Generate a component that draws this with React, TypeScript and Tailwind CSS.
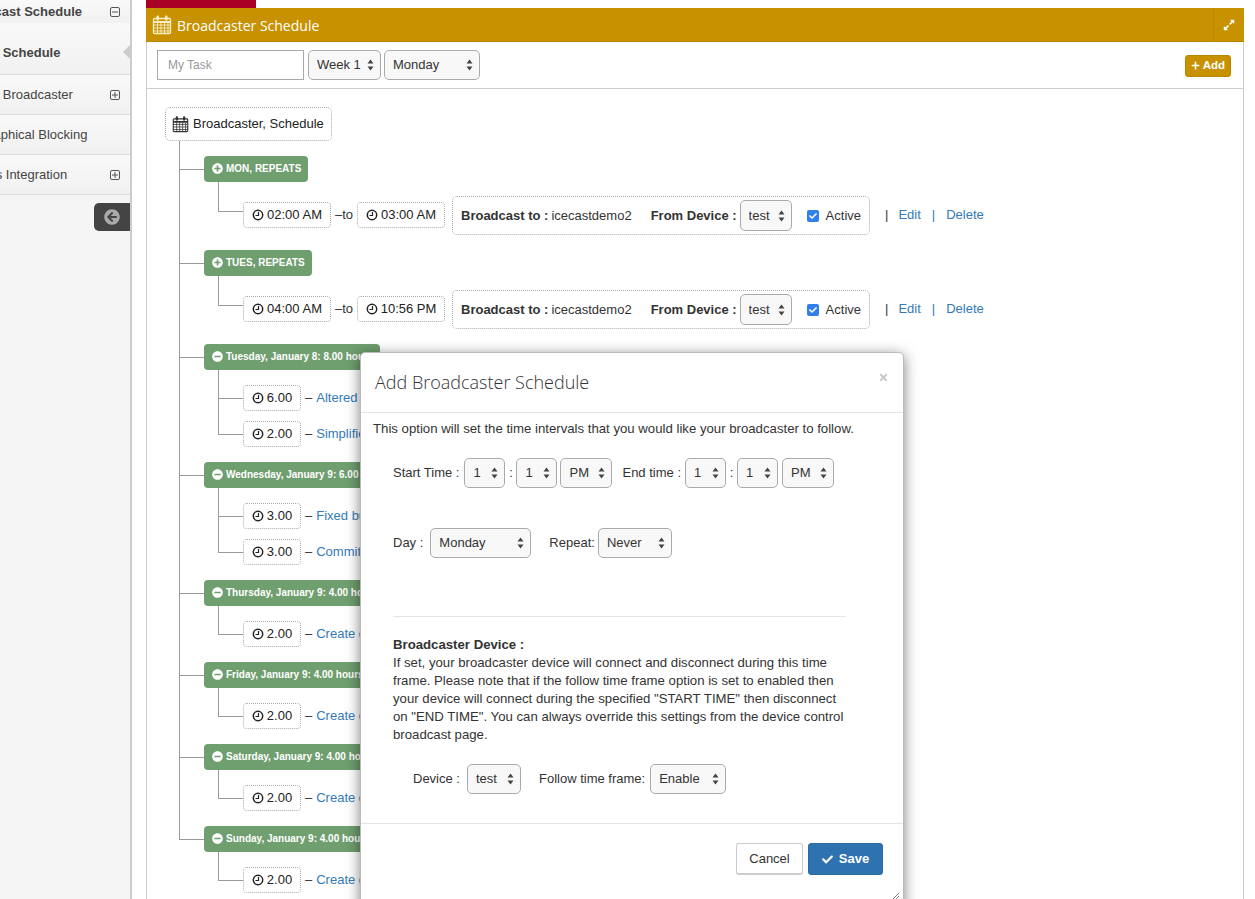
import { FaArrowCircleLeft, FaCheck, FaExpandAlt, FaMinusCircle, FaPlus, FaPlusCircle, FaTimes } from 'react-icons/fa';

const LINE = 'border-[#999]';

function CalendarIcon({ className }: { className: string }) {
  return (
    <svg viewBox="0 0 20 20" className={className} fill="none" stroke="currentColor">
      <path d="M2.5 4h15a1 1 0 0 1 1 1v13a1 1 0 0 1-1 1h-15a1 1 0 0 1-1-1V5a1 1 0 0 1 1-1z" strokeWidth="1.3" />
      <path d="M1.5 7.5h17" strokeWidth="2" />
      <path d="M1.5 10.5h17M1.5 13.5h17M1.5 16.500h17M5.500 7.500V19M9 7.500V19M12.500 7.500V19M16 7.500V19" strokeWidth="0.9" />
      <rect x="4.500" y="1" width="2.500" height="5" rx="1" fill="currentColor" stroke="none" />
      <rect x="13" y="1" width="2.500" height="5" rx="1" fill="currentColor" stroke="none" />
    </svg>
  );
}

function ClockIcon() {
  return (
    <svg viewBox="0 0 12 12" className="w-[12px] h-[12px] shrink-0" fill="none" stroke="currentColor">
      <circle cx="6" cy="6" r="4.700" strokeWidth="1.500" />
      <path d="M6.500 3v3.500H3.500" strokeWidth="1.200" />
    </svg>
  );
}

function BoxIcon({ minus }: { minus?: boolean }) {
  return (
    <svg viewBox="0 0 10 10" className="w-[10px] h-[10px] text-[#555]" fill="none" stroke="currentColor">
      <rect x="0.500" y="0.500" width="9" height="9" rx="1.500" />
      <path d={minus ? 'M2 5h6' : 'M2 5h6M5 2v6'} />
    </svg>
  );
}

function UpDown() {
  return (
    <svg viewBox="0 0 7 12" className="absolute right-[7px] top-1/2 -translate-y-1/2 w-[7px] h-[12px] pointer-events-none text-[#444]" fill="currentColor">
      <path d="M3.500 0.500 6.500 4.500H0.500zM3.500 11.500 0.500 7.500H6.500z" />
    </svg>
  );
}

function Select({ value, width, height = 'h-[30px]' }: { value: string; width: string; height?: string }) {
  return (
    <span className={`relative inline-block shrink-0 ${width} ${height}`}>
      <select
        defaultValue={value}
        className="appearance-none block w-full h-full pl-[8px] pr-4 rounded-[5px] border border-[#aaa] bg-[#f8f8f8] text-[13px] text-[#333]"
      >
        <option>{value}</option>
      </select>
      <UpDown />
    </span>
  );
}

function TimeBox({ text, width }: { text: string; width: string }) {
  return (
    <span className={`inline-flex items-center justify-center gap-[3px] h-[26px] shrink-0 ${width} rounded-[4px] border border-dotted border-[#aaa] text-[#222] bg-white`}>
      <ClockIcon />
      {text}
    </span>
  );
}

function BroadcastRow({ from, to }: { from: string; to: string }) {
  return (
    <div className="flex items-center h-[38px] -mt-[1px] mb-[1px] text-[#333]">
      <TimeBox text={from} width="w-[88px]" />
      <span className="w-[26px] text-center">–to</span>
      <TimeBox text={to} width="w-[88px]" />
      <div className="flex items-center h-[39px] -mb-[1px] w-[418px] ml-[7px] pl-[8px] rounded-[5px] border border-dotted border-[#aaa]">
        <b>Broadcast to :</b>
        <span className="ml-[3px]">icecastdemo2</span>
        <b className="ml-[19px]">From Device :</b>
        <span className="ml-[3px]"><Select value="test" width="w-[52px]" height="h-[31px]" /></span>
        <span className="ml-[15px] w-[12px] h-[12px] rounded-[2px] bg-[#2f80ed] text-white flex items-center justify-center">
          <FaCheck className="w-[8px] h-[8px]" />
        </span>
        <span className="ml-[7px]">Active</span>
      </div>
      <span className="ml-[15px]">|</span>
      <a className="ml-[10px] text-[#337ab7]">Edit</a>
      <span className="ml-[11px] text-[#337ab7]">|</span>
      <a className="ml-[11px] text-[#337ab7]">Delete</a>
    </div>
  );
}

function TaskRow({ hours, title }: { hours: string; title: string }) {
  return (
    <div className="flex items-center h-[26px]">
      <TimeBox text={hours} width="w-[58px]" />
      <span className="ml-[4px] text-[#333]">–</span>
      <a className="ml-[4px] text-[#337ab7] whitespace-nowrap">{title}</a>
    </div>
  );
}

// stub is the elbow; the column border carries the line on to the next sibling
function Child({ first, last, stub, children }: { first: boolean; last: boolean; stub: string; children: React.ReactNode }) {
  return (
    <div className="flex">
      <div className={`w-[25px] shrink-0 ${last ? '' : `border-l ${LINE}`}`}>
        <div className={`border-b ${LINE} ${last ? `border-l ${LINE}` : ''} ${stub}`} />
      </div>
      <div className={first ? 'pt-[15px]' : 'pt-[10px]'}>{children}</div>
    </div>
  );
}

function Group({ label, open, last, children }: { label: string; open?: boolean; last?: boolean; children: React.ReactNode }) {
  return (
    <div className="flex">
      <div className={`w-[25px] shrink-0 ${last ? '' : `border-l ${LINE}`}`}>
        <div className={`h-[29px] border-b ${LINE} ${last ? `border-l ${LINE}` : ''}`} />
      </div>
      <div className="pt-[15px]">
        <div className="inline-flex items-center gap-[3px] h-[26px] pl-[8px] pr-[7px] pb-[1px] rounded-[4px] bg-[#6f9e6f] text-white text-[10px] font-bold whitespace-nowrap align-top">
          {open ? <FaPlusCircle className="w-[11px] h-[11px]" /> : <FaMinusCircle className="w-[11px] h-[11px]" />}
          {label}
        </div>
        <div className="ml-[14px]">{children}</div>
      </div>
    </div>
  );
}

const taskGroups = [
  { label: 'Tuesday, January 8: 8.00 hours', tasks: [['6.00', 'Altered code'], ['2.00', 'Simplified code']] },
  { label: 'Wednesday, January 9: 6.00 hours', tasks: [['3.00', 'Fixed bugs'], ['3.00', 'Committing code']] },
  { label: 'Thursday, January 9: 4.00 hours', tasks: [['2.00', 'Create docs']] },
  { label: 'Friday, January 9: 4.00 hours', tasks: [['2.00', 'Create docs']] },
  { label: 'Saturday, January 9: 4.00 hours', tasks: [['2.00', 'Create docs']] },
  { label: 'Sunday, January 9: 4.00 hours', tasks: [['2.00', 'Create docs']] },
];

function SideItem({ label, offset, bold, icon, border, size }: { label: string; offset: string; bold?: boolean; icon?: 'plus' | 'minus'; border?: boolean; size?: string }) {
  return (
    <div className={`flex items-center justify-between ${size ?? 'h-[40px]'} pr-[10px] overflow-hidden whitespace-nowrap bg-gradient-to-b from-[#f9f9f9] to-[#f1f1f1] ${border ? 'border-b border-[#ddd]' : ''} ${bold ? 'font-bold' : ''} text-[#444]`}>
      <span className={offset}>{label}</span>
      {icon && <BoxIcon minus={icon === 'minus'} />}
    </div>
  );
}

export default function App() {
  return (
    <div className="flex h-[899px] w-[1255px] overflow-hidden relative bg-white text-[13px] text-[#333] font-['Liberation_Sans',Arial,sans-serif]">
      {/* sidebar */}
      <aside className="w-[132px] shrink-0 bg-[#f5f5f5] border-r-2 border-[#ccc] flex flex-col">
        <SideItem label="Broadcast Schedule" offset="ml-[-43px]" bold icon="minus" size="h-[23px]" />
        <div className="relative">
          <SideItem label="My Schedule" offset="ml-[-19px]" bold border size="h-[52px] pt-[8px]" />
          <span className="absolute right-0 top-[22px] w-0 h-0 border-y-[7px] border-y-transparent border-r-[7px] border-r-[#ccc]" />
        </div>
        <SideItem label="Add Broadcaster" offset="ml-[-24px]" icon="plus" border />
        <SideItem label="Graphical Blocking" offset="ml-[-21px]" border />
        <SideItem label="Icecast's Integration" offset="ml-[-48px]" icon="plus" border />
        <div className="flex justify-end mt-[8px]">
          <div className="w-[36px] h-[28px] rounded-l-[5px] bg-[#444] flex items-center justify-center">
            <FaArrowCircleLeft className="w-[16px] h-[16px] text-[#aaa]" />
          </div>
        </div>
      </aside>

      {/* main panel */}
      <main className="ml-[14px] w-[1098px] shrink-0 flex flex-col">
        <div className="w-[110px] h-[8px] bg-[#ab0026] shrink-0" />
        <div className="flex items-center justify-between h-[34px] shrink-0 bg-[#c79100] border-b border-[#b88600] text-white">
          <div className="flex items-center gap-[5px] pl-[6px] text-[14px] font-['Open_Sans',sans-serif]">
            <CalendarIcon className="w-[20px] h-[21px] text-[#fbeecb]" />
            <span className="pt-[2px]">Broadcaster Schedule</span>
          </div>
          <div className="w-[31px] h-full border-l border-[#b88600] flex items-center justify-center">
            <FaExpandAlt className="w-[12px] h-[12px]" />
          </div>
        </div>
        <div className="flex-1 border-x border-[#ccc]">
          <div className="flex items-center h-[47px] pl-[10px] pr-[12px] border-b border-[#ccc]">
            <input placeholder="My Task" className="w-[147px] h-[30px] px-[10px] border border-[#aaa] text-[12px] placeholder:text-[#999]" />
            <span className="ml-[4px]"><Select value="Week 1" width="w-[73px]" /></span>
            <span className="ml-[3px]"><Select value="Monday" width="w-[96px]" /></span>
            <button className="ml-auto flex items-center justify-between w-[46px] h-[22px] px-[5px] mt-[1px] rounded-[3px] bg-[#c79100] border border-[#b88600] text-white text-[11.5px] font-bold">
              <FaPlus className="w-[9px] h-[9px]" /> Add
            </button>
          </div>

          <div className="pl-[18px] pt-[18px]">
            <div className="flex items-center gap-[4px] h-[34px] w-[167px] pl-[6px] rounded-[5px] border border-dotted border-[#aaa] text-[#222]">
              <CalendarIcon className="w-[17px] h-[18px] text-[#333]" />
              Broadcaster, Schedule
            </div>
            <div className="ml-[14px]">
              <Group label="MON, REPEATS" open>
                <Child first last stub="h-[30px]"><BroadcastRow from="02:00 AM" to="03:00 AM" /></Child>
              </Group>
              <Group label="TUES, REPEATS" open>
                <Child first last stub="h-[30px]"><BroadcastRow from="04:00 AM" to="10:56 PM" /></Child>
              </Group>
              {taskGroups.map((g, i) => (
                <Group key={g.label} label={g.label} last={i === taskGroups.length - 1}>
                  {g.tasks.map((t, j) => (
                    <Child key={j} first={j === 0} last={j === g.tasks.length - 1} stub={j === 0 ? 'h-[29px]' : 'h-[24px]'}>
                      <TaskRow hours={t[0]} title={t[1]} />
                    </Child>
                  ))}
                </Group>
              ))}
            </div>
          </div>
        </div>
      </main>

      {/* modal */}
      <div className="absolute left-[360px] top-[352px] w-[544px] h-[560px] bg-white rounded-[5px] border border-[#bbb] shadow-[0_3px_14px_rgba(0,0,0,0.5)] flex flex-col">
        <div className="relative h-[60px] shrink-0 border-b border-[#e5e5e5] pl-[14px] pt-[16px] text-[18px] font-light text-[#333] font-['Open_Sans',sans-serif] leading-[26px]">
          Add Broadcaster Schedule
          <FaTimes className="absolute right-[14px] top-[19px] w-[11px] h-[11px] text-[#c8c8c8]" />
        </div>
        <div className="h-[410px] shrink-0 px-[12px] pt-[7px]">
          <p className="leading-[18px] text-[13.2px]">This option will set the time intervals that you would like your broadcaster to follow.</p>
          <div className="flex items-center mt-[20px] ml-[20px] h-[30px]">
            <span>Start Time :</span>
            <span className="ml-[5px]"><Select value="1" width="w-[41px]" /></span>
            <span className="w-[11px] text-center">:</span>
            <Select value="1" width="w-[41px]" />
            <span className="ml-[3px]"><Select value="PM" width="w-[52px]" /></span>
            <span className="ml-[10px]">End time :</span>
            <span className="ml-[4px]"><Select value="1" width="w-[41px]" /></span>
            <span className="w-[11px] text-center">:</span>
            <Select value="1" width="w-[41px]" />
            <span className="ml-[4px]"><Select value="PM" width="w-[52px]" /></span>
          </div>
          <div className="flex items-center mt-[40px] ml-[20px] h-[30px]">
            <span>Day :</span>
            <span className="ml-[7px]"><Select value="Monday" width="w-[101px]" /></span>
            <span className="ml-[18px]">Repeat:</span>
            <span className="ml-[3px]"><Select value="Never" width="w-[74px]" /></span>
          </div>
          <div className="mt-[58px] ml-[20px] w-[453px] border-t border-[#e5e5e5]" />
          <div className="mt-[19px] ml-[20px] w-[453px] leading-[18px] text-[13.2px]">
            <b>Broadcaster Device :</b>
            <p>If set, your broadcaster device will connect and disconnect during this time frame. Please note that if the follow time frame option is set to enabled then your device will connect during the specified "START TIME" then disconnect on "END TIME". You can always override this settings from the device control broadcast page.</p>
          </div>
          <div className="flex items-center mt-[20px] ml-[40px] h-[30px]">
            <span>Device :</span>
            <span className="ml-[7px]"><Select value="test" width="w-[54px]" /></span>
            <span className="ml-[18px]">Follow time frame:</span>
            <span className="ml-[5px]"><Select value="Enable" width="w-[76px]" /></span>
          </div>
        </div>
        <div className="flex justify-end gap-[5px] border-t border-[#e5e5e5] pt-[19px] pr-[20px]">
          <button className="w-[67px] h-[32px] rounded-[3px] border border-[#ccc] border-b-2 bg-white text-[#333]">Cancel</button>
          <button className="flex items-center justify-center gap-[6px] w-[75px] h-[32px] rounded-[3px] bg-[#2e72b0] border border-[#2a6aa5] text-white font-bold">
            <FaCheck className="w-[11px] h-[11px]" /> Save
          </button>
        </div>
        <svg viewBox="0 0 6 6" className="absolute left-[532px] top-[540px] w-[6px] h-[6px] text-[#666]" fill="none" stroke="currentColor" strokeWidth="0.8">
          <path d="M0 6 6 0M3 6l3-3" />
        </svg>
      </div>
    </div>
  );
}
